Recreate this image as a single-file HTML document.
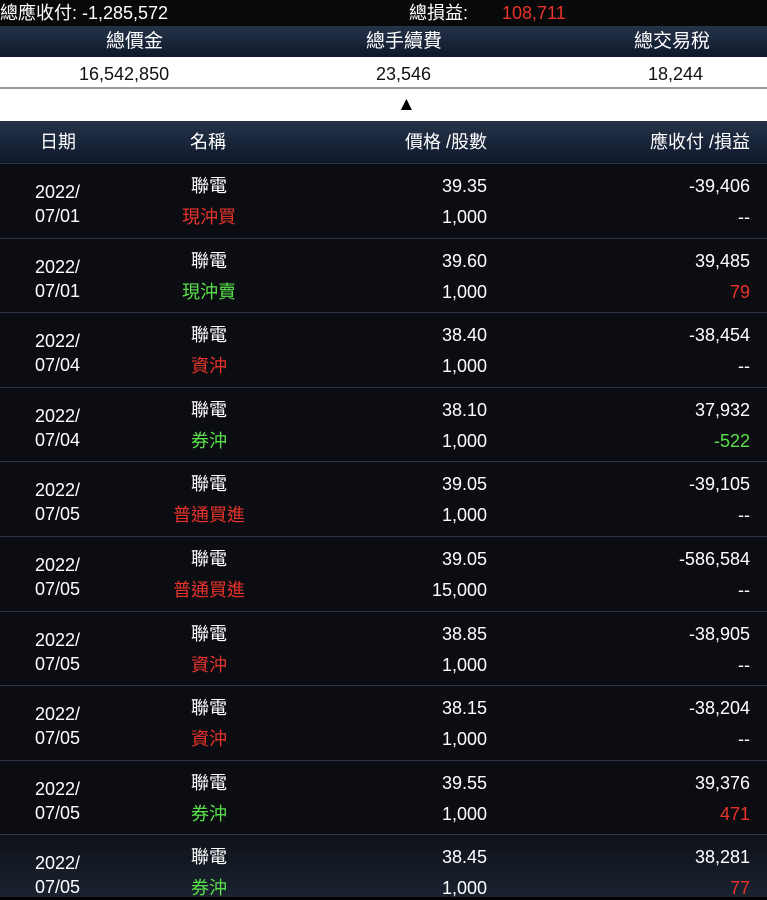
<!DOCTYPE html>
<html><head><meta charset="utf-8"><style>
*{margin:0;padding:0;box-sizing:border-box}
html,body{width:767px;height:900px;overflow:hidden}
body{background:#0b0d12;font-family:"Liberation Sans","Noto Sans CJK TC",sans-serif;color:#fff;position:relative;line-height:20px}
.abs{position:absolute;white-space:nowrap}
.top{left:0;top:0;width:767px;height:26px;background:#08090b;font-size:18px}
.hdr{background:linear-gradient(#253349,#152034 70%,#0f1828);}
.r{color:#e8332a}.g{color:#59e04a}
.row{position:absolute;left:0;width:767px;height:74.6px;border-top:1.5px solid #2c3646;background:#0b0d12;font-size:18px;overflow:hidden}
.row span{position:absolute;white-space:nowrap;line-height:20px}
.d{left:35px;top:16px;line-height:24px!important}
.n{left:170px;width:78px;text-align:center}
.p{right:280px}
.a{right:17px}
.l1{top:12px}.l2{top:43px}
</style></head><body>
<div class="abs top">
<span class="abs" style="left:0;top:3px">總應收付: -1,285,572</span>
<span class="abs" style="left:409px;top:3px">總損益:</span>
<span class="abs r" style="left:502px;top:3px">108,711</span>
</div>
<div class="abs hdr" style="left:0;top:26px;width:767px;height:31px;font-size:19px">
<span class="abs" style="left:106px;top:6px">總價金</span>
<span class="abs" style="left:366px;top:6px">總手續費</span>
<span class="abs" style="left:634px;top:6px">總交易稅</span>
</div>
<div class="abs" style="left:0;top:57px;width:767px;height:32px;background:#fff;border-bottom:2px solid #9a9a9a;color:#111;font-size:18px">
<span class="abs" style="left:79px;top:7px">16,542,850</span>
<span class="abs" style="left:376px;top:7px">23,546</span>
<span class="abs" style="left:648px;top:7px">18,244</span>
</div>
<div class="abs" style="left:0;top:89px;width:767px;height:32px;background:#fff;color:#000;font-size:19px">
<span class="abs" style="left:397px;top:6px">▲</span>
</div>
<div class="abs hdr" style="left:0;top:121px;width:767px;height:42px;font-size:18px">
<span class="abs" style="left:40px;top:11px">日期</span>
<span class="abs" style="left:190px;top:11px">名稱</span>
<span class="abs" style="right:280px;top:11px">價格 /股數</span>
<span class="abs" style="right:17px;top:11px">應收付 /損益</span>
</div>

<div class="row" style="top:163px"><span class="d">2022/<br>07/01</span><span class="n l1">聯電</span><span class="n l2 r">現沖買</span><span class="p l1">39.35</span><span class="p l2">1,000</span><span class="a l1">-39,406</span><span class="a l2">--</span></div>
<div class="row" style="top:237.6px"><span class="d">2022/<br>07/01</span><span class="n l1">聯電</span><span class="n l2 g">現沖賣</span><span class="p l1">39.60</span><span class="p l2">1,000</span><span class="a l1">39,485</span><span class="a l2 r">79</span></div>
<div class="row" style="top:312.2px"><span class="d">2022/<br>07/04</span><span class="n l1">聯電</span><span class="n l2 r">資沖</span><span class="p l1">38.40</span><span class="p l2">1,000</span><span class="a l1">-38,454</span><span class="a l2">--</span></div>
<div class="row" style="top:386.8px"><span class="d">2022/<br>07/04</span><span class="n l1">聯電</span><span class="n l2 g">券沖</span><span class="p l1">38.10</span><span class="p l2">1,000</span><span class="a l1">37,932</span><span class="a l2 g">-522</span></div>
<div class="row" style="top:461.4px"><span class="d">2022/<br>07/05</span><span class="n l1">聯電</span><span class="n l2 r" style="left:160px;width:98px">普通買進</span><span class="p l1">39.05</span><span class="p l2">1,000</span><span class="a l1">-39,105</span><span class="a l2">--</span></div>
<div class="row" style="top:536px"><span class="d">2022/<br>07/05</span><span class="n l1">聯電</span><span class="n l2 r" style="left:160px;width:98px">普通買進</span><span class="p l1">39.05</span><span class="p l2">15,000</span><span class="a l1">-586,584</span><span class="a l2">--</span></div>
<div class="row" style="top:610.6px"><span class="d">2022/<br>07/05</span><span class="n l1">聯電</span><span class="n l2 r">資沖</span><span class="p l1">38.85</span><span class="p l2">1,000</span><span class="a l1">-38,905</span><span class="a l2">--</span></div>
<div class="row" style="top:685.2px"><span class="d">2022/<br>07/05</span><span class="n l1">聯電</span><span class="n l2 r">資沖</span><span class="p l1">38.15</span><span class="p l2">1,000</span><span class="a l1">-38,204</span><span class="a l2">--</span></div>
<div class="row" style="top:759.8px"><span class="d">2022/<br>07/05</span><span class="n l1">聯電</span><span class="n l2 g">券沖</span><span class="p l1">39.55</span><span class="p l2">1,000</span><span class="a l1">39,376</span><span class="a l2 r">471</span></div>
<div class="row" style="top:834.4px;height:63px;background:linear-gradient(#0e1219,#1a2230)"><span class="d">2022/<br>07/05</span><span class="n l1">聯電</span><span class="n l2 g">券沖</span><span class="p l1">38.45</span><span class="p l2">1,000</span><span class="a l1">38,281</span><span class="a l2 r">77</span></div>
<div class="abs" style="left:0;top:897px;width:767px;height:3px;background:#000"></div>
</body></html>
